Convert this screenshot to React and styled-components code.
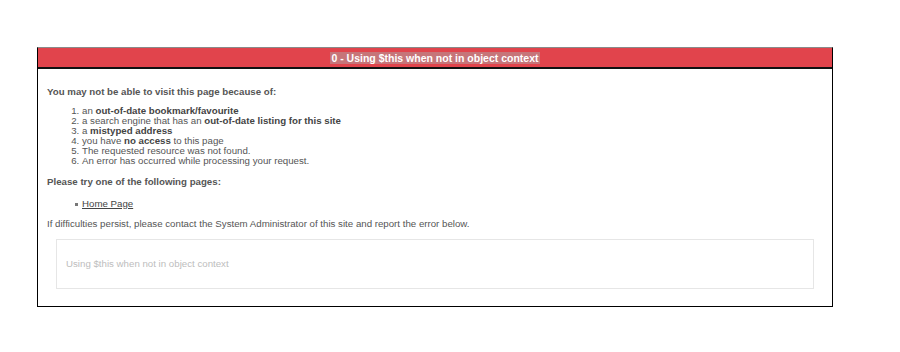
import styled, { createGlobalStyle } from 'styled-components';

const GlobalStyle = createGlobalStyle`
  body {
    margin: 0;
    background: #fff;
    font-family: "Liberation Sans", Arial, sans-serif;
  }
`;

const Page = styled.div`
  padding: 47px 0 0 37px;
`;

const ErrorPanel = styled.div`
  width: 794px;
  height: 258px;
  border: 1px solid #000;
  border-top-color: #8a8a8a;
  box-sizing: content-box;
`;

const TitleBar = styled.div`
  height: 19px;
  background: #e1444c;
  border-bottom: 2px solid #111;
  display: flex;
  align-items: center;
  justify-content: center;
`;

const Title = styled.span`
  font-size: 10.5px;
  font-weight: 700;
  color: #fff;
  line-height: 12px;
  padding: 0 1px;
  background: rgba(180, 150, 152, 0.6);
`;

const Body = styled.div`
  padding: 18px 9px 0;
  font-size: 9.7px;
  line-height: 10px;
  color: #555;
`;

const Heading = styled.p`
  margin: 0;
  font-weight: 700;
`;

const Reasons = styled.ol`
  margin: 9px 0 0;
  padding-left: 35px;

  strong {
    font-weight: 700;
    color: #444;
  }
`;

const Links = styled.ul`
  margin: 12px 0 0;
  padding-left: 35px;
  list-style: none;

  li {
    position: relative;
  }

  li::before {
    content: '';
    position: absolute;
    left: -7px;
    top: 4px;
    width: 3px;
    height: 3px;
    background: #777;
  }

  a {
    color: #444;
    text-decoration: underline;
  }
`;

const Note = styled.p`
  margin: 10px 0 0;
`;

const Spaced = styled(Heading)`
  margin-top: 11px;
`;

const MessageBox = styled.div`
  margin: 10px 9px 0;
  height: 48px;
  border: 1px solid #e6e6e6;
  display: flex;
  align-items: center;
  padding-left: 9px;
  color: #bdbdbd;
  font-size: 9.7px;
`;

export default function App() {
  return (
    <>
      <GlobalStyle />
      <Page>
        <ErrorPanel>
          <TitleBar>
            <Title>0 - Using $this when not in object context</Title>
          </TitleBar>
          <Body>
            <Heading>You may not be able to visit this page because of:</Heading>
            <Reasons>
              <li>an <strong>out-of-date bookmark/favourite</strong></li>
              <li>a search engine that has an <strong>out-of-date listing for this site</strong></li>
              <li>a <strong>mistyped address</strong></li>
              <li>you have <strong>no access</strong> to this page</li>
              <li>The requested resource was not found.</li>
              <li>An error has occurred while processing your request.</li>
            </Reasons>
            <Spaced>Please try one of the following pages:</Spaced>
            <Links>
              <li><a href="#">Home Page</a></li>
            </Links>
            <Note>
              If difficulties persist, please contact the System Administrator of this site and report the error below.
            </Note>
            <MessageBox>Using $this when not in object context</MessageBox>
          </Body>
        </ErrorPanel>
      </Page>
    </>
  );
}
